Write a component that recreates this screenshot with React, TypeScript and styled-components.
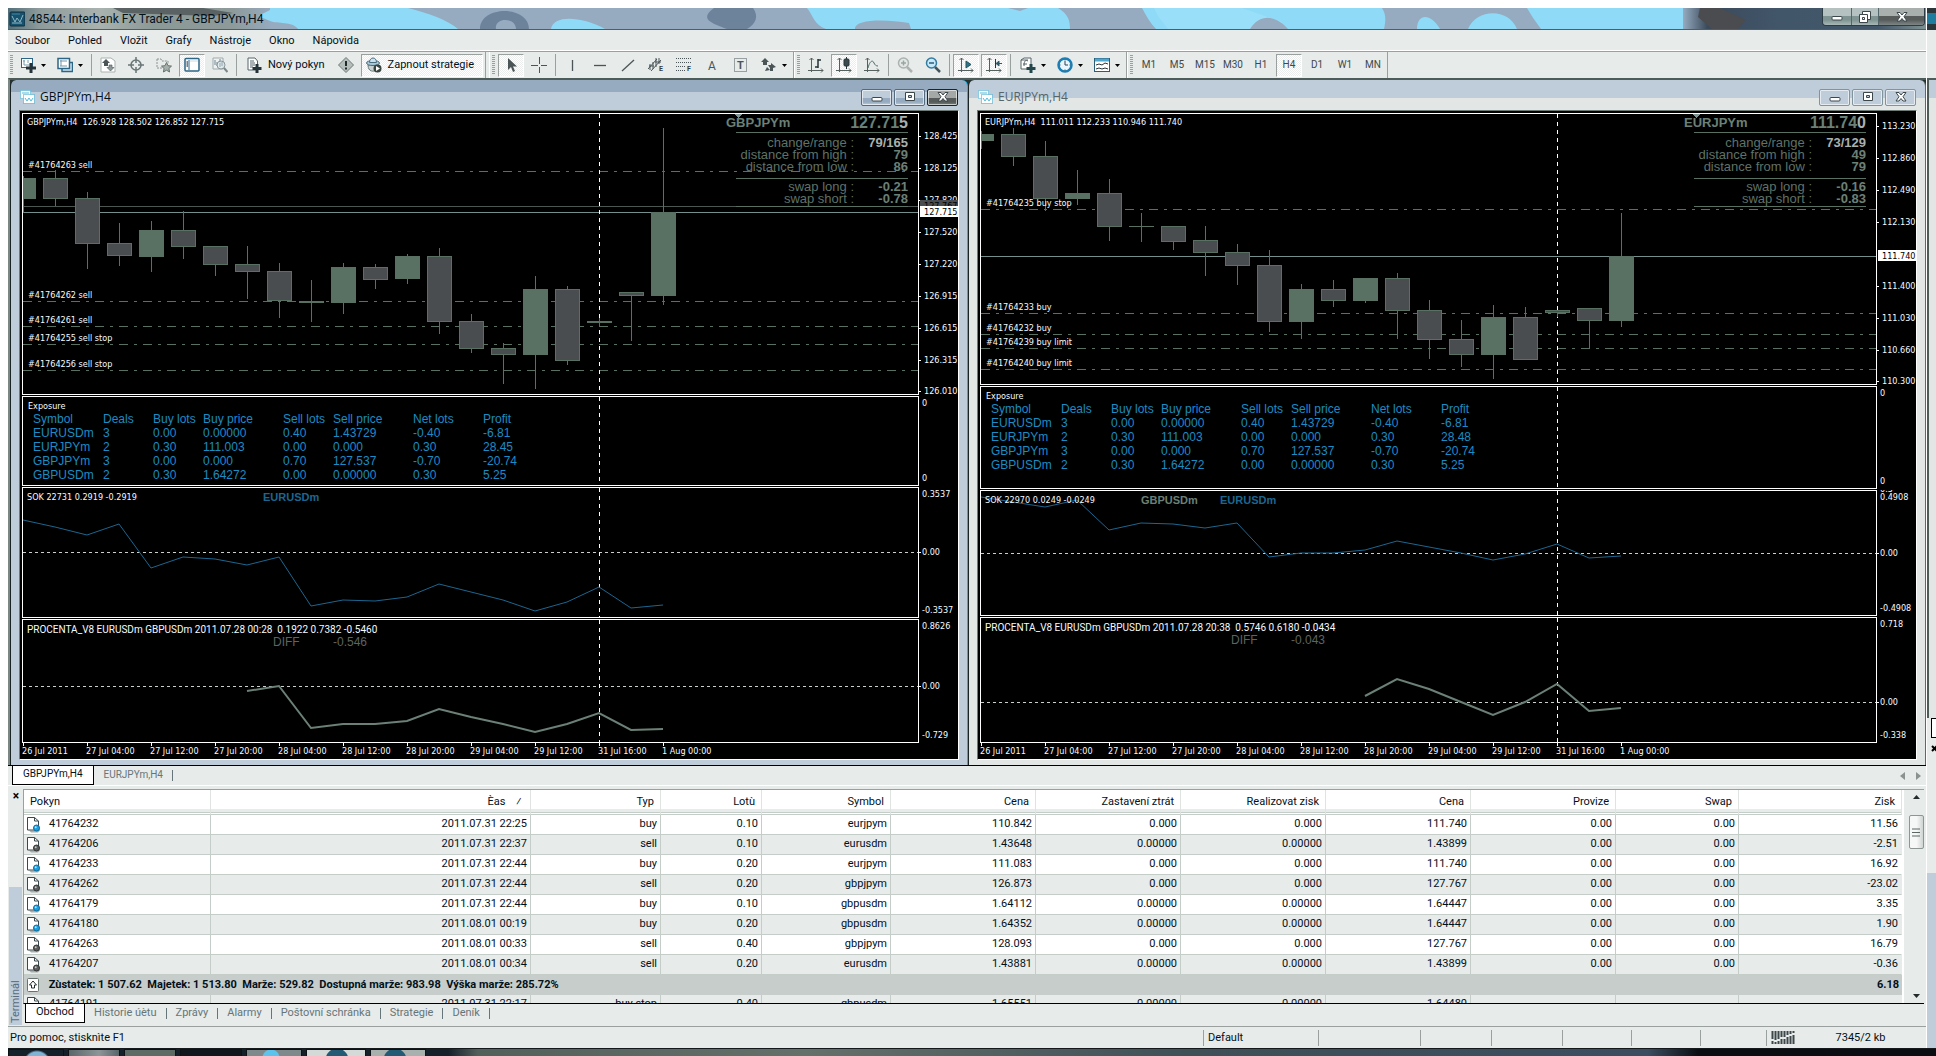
import React from "react";
import styled, { createGlobalStyle, css } from "styled-components";

/* ---------- tokens ---------- */

const c = {
  face: "#e7ebe9",
  line: "#9aa09d",
  grid: "#c5cdc9",
  frame: "#bfccda",
  frameDark: "#96abc0",
  ink: "#02101a",
  dim: "#66757a",
  bull: "#597162",
  bear: "#4a4d50",
  chartText: "#f4fbff",
  blue: "#1b8cc6",
  deepBlue: "#1d6690",
  sage: "#6b8076",
};

const ui = `Roboto, "Open Sans", sans-serif`;
const narrow = `"DejaVu Sans Condensed", Roboto, sans-serif`;
const arial = `"Liberation Sans", Arial, sans-serif`;

const Global = createGlobalStyle`
  html, body { margin: 0; background: #fff; }
  body { font: 11px/14px ${ui}; color: ${c.ink}; overflow-x: hidden; }
  * { box-sizing: border-box; }
  button { font: inherit; color: inherit; margin: 0; padding: 0; border: 0; background: none; }
  svg { display: block; flex: none; }
`;

/* ---------- shell ---------- */

const Page = styled.div`
  min-height: 100vh;
  display: flex;
  flex-direction: column;
  padding: 8px 0 0 8px;
`;
const Desktop = styled.div`
  display: flex;
`;
const AppWindow = styled.div`
  flex: 1;
  min-width: 0;
  background: ${c.face};
`;

const TitleBar = styled.header`
  position: relative;
  height: 22px;
  display: flex;
  align-items: flex-start;
  border-bottom: 1px solid #4a5f6c;
  background: ${c.frameDark};
  overflow: hidden;
`;
const Wallpaper = styled.svg`
  position: absolute;
  inset: 0;
  width: 100%;
  height: 21px;
`;
const AppTitle = styled.h1`
  position: relative;
  margin: 0;
  flex: 1;
  display: flex;
  align-items: center;
  gap: 4px;
  height: 21px;
  padding-left: 1px;
  font: 400 12px/20px ${ui};
`;
const CaptionGroup = styled.div`
  position: relative;
  display: flex;
  height: 18px;
  margin-right: 1px;
  border: 1px solid #2d3c44;
  border-top: 0;
  border-radius: 0 0 4px 4px;
  overflow: hidden;
`;
const AppCaption = styled.button<{ $w: number; $dark?: boolean }>`
  width: ${(p) => p.$w}px;
  display: flex;
  align-items: center;
  justify-content: center;
  border-left: 1px solid #55666b;
  background: ${(p) =>
    p.$dark
      ? "linear-gradient(#a9afad 0 8px, #575c5b 8px 12px, #7d8785)"
      : "linear-gradient(#b4c1c0 0 8px, #7f9492 8px 12px, #a9b8b6)"};
  &:first-child { border-left: 0; }
`;

const MenuBar = styled.nav`
  display: flex;
  gap: 18px;
  height: 22px;
  padding-left: 7px;
  align-items: center;
  border-bottom: 1px solid ${c.line};
  box-shadow: inset 0 -1px #fff;
  font-size: 11px;
`;

const ToolRow = styled.div`
  display: flex;
  height: 26px;
`;
const ToolGroup = styled.div`
  display: flex;
  align-items: center;
  padding-left: 2px;
  border-left: 1px solid #fff;
  border-right: 1px solid ${c.line};
  &:first-child {
    border-left: 0;
    padding-right: 1px;
    margin-right: 3px;
  }
`;
const Grip = styled.span`
  width: 3px;
  height: 20px;
  margin: 0 2px 0 0;
  background: repeating-linear-gradient(${c.line} 0 1px, transparent 1px 2px);
`;
const ToolSep = styled.span`
  width: 1px;
  height: 22px;
  margin: 0 2px;
  background: ${c.line};
`;
const pressed = css`
  border: 1px solid #fff;
  border-top-color: ${c.line};
  border-left-color: ${c.line};
  background: repeating-conic-gradient(#fff 0 25%, #eceeed 0 50%) 0 0 / 2px 2px;
`;
const Tool = styled.button<{ $on?: boolean }>`
  width: 26px;
  height: 23px;
  margin: 0 1px;
  display: flex;
  align-items: center;
  justify-content: center;
  font-size: 10px;
  color: #40484c;
  ${(p) => p.$on && pressed}
`;
const DropTool = styled.button`
  width: 37px;
  height: 23px;
  padding-left: 5px;
  display: flex;
  align-items: center;
  gap: 5px;
  ${ToolSep} + &, ${Tool} + & { margin-left: 2px; }
`;
const TextTool = styled.button<{ $on?: boolean }>`
  height: 23px;
  padding: ${(p) => (p.$on ? "0 8px 0 4px" : "0 6px")};
  margin: 0 1px;
  display: flex;
  align-items: center;
  gap: 6px;
  white-space: nowrap;
  ${(p) => p.$on && pressed}
`;

/* ---------- chart windows ---------- */

const Workspace = styled.main`
  display: flex;
  border-top: 2px solid #4e5c59;
  border-left: 2px solid #7c8784;
  background: #26302f;
`;
const ChartFrame = styled.section<{ $active?: boolean }>`
  flex: 1;
  min-width: 0;
  padding: 0 8px 5px;
  border-radius: 6px 6px 0 0;
  border-left: 1px solid #1b2526;
  border-right: 1px solid ${(p) => (p.$active ? "#19b4ea" : "#5d6967")};
  background: ${(p) =>
    p.$active
      ? `linear-gradient(${c.frameDark} 0 12px, ${c.frame} 12px)`
      : `linear-gradient(${c.frame} 0 18px, #e2e6e4 18px)`};
`;
const FrameTitle = styled.header<{ $active?: boolean }>`
  height: 30px;
  padding: 4px 1px 0 0;
  display: flex;
  align-items: center;
  gap: 2px;
  color: ${(p) => (p.$active ? c.ink : "#55646b")};
`;
const FrameName = styled.h2`
  flex: 1;
  margin: 0 0 0 3px;
  font: 400 12px/24px "Open Sans", sans-serif;
`;
const FrameButton = styled.button<{ $active?: boolean; $close?: boolean }>`
  width: 31px;
  height: 17px;
  display: flex;
  align-items: center;
  justify-content: center;
  border: 1px solid ${(p) => (p.$active ? (p.$close ? "#1d2425" : "#566a7e") : "#81949c")};
  border-radius: 2px;
  box-shadow: inset 0 0 0 1px rgba(255, 255, 255, 0.6);
  background: ${(p) =>
    !p.$active
      ? c.frame
      : p.$close
        ? "linear-gradient(#a4a9a7 0 8px, #565b5a 8px 12px, #77837c)"
        : `linear-gradient(${c.frame} 0 8px, ${c.frameDark} 8px 12px, ${c.frame})`};
`;
const ChartClient = styled.div`
  border: 1px solid #fff;
  border-top-color: #6d7a75;
  border-left-color: #6d7a75;
  padding: 2px 0 0 2px;
  background: #000;
  display: flex;
  flex-direction: column;
  gap: 1px;
`;
const PanelRow = styled.div<{ $h: number }>`
  display: flex;
  height: ${(p) => p.$h}px;
`;
const Plot = styled.div`
  position: relative;
  flex: 1;
  min-width: 0;
  border: 1px solid #fff;
  overflow: hidden;
`;
const PlotSvg = styled.svg`
  position: absolute;
  inset: 0;
  width: 100%;
  height: 100%;
`;
const Note = styled.text<{ $large?: boolean }>`
  font: ${(p) => (p.$large ? `10px/10px ${ui}` : `9px/10px ${narrow}`)};
  fill: ${c.chartText};
  white-space: pre;
`;
const Mark = styled.text<{ $bold?: boolean }>`
  font: ${(p) => (p.$bold ? "700 11px" : "400 12px")} ${arial};
`;
const AxisSvg = styled.svg`
  width: 39px;
  height: 100%;
  overflow: hidden;
`;
const TimeSvg = styled.svg`
  width: 100%;
  height: 16px;
  margin-top: -1px;
`;

const Info = styled.div`
  position: absolute;
  top: 0;
  right: 10px;
  width: 182px;
  font: 13px/12px ${arial};
  color: #5e7268;
`;
const InfoHead = styled.div`
  display: flex;
  justify-content: space-between;
  align-items: center;
  height: 18px;
  font-weight: 700;
  color: ${c.sage};
  strong { font-size: 16px; }
  em { font-style: normal; color: #a9b1ae; }
`;
const InfoGroup = styled.dl<{ $last?: boolean }>`
  margin: 0 0 0 10px;
  padding: ${(p) => (p.$last ? "2px 0 1px" : "4px 0 5px")};
  border-top: 1px solid ${c.bull};
  ${(p) => p.$last && `border-bottom: 1px solid ${c.bull};`}
`;
const InfoRow = styled.div<{ $lit?: boolean }>`
  display: flex;
  justify-content: flex-end;
  dt { white-space: nowrap; }
  dd {
    width: 54px;
    margin: 0;
    text-align: right;
    font-weight: 700;
    color: ${(p) => (p.$lit ? "#a9b1ae" : c.sage)};
  }
`;

const Exposure = styled.div`
  padding: 4px 0 0 5px;
`;
const ExposureTitle = styled.h3`
  margin: 0;
  font: 400 9px/10px ${narrow};
  color: ${c.chartText};
`;
const ExposureTable = styled.table`
  margin-left: 5px;
  border-spacing: 0;
  table-layout: fixed;
  width: 530px;
  font: 12px/14px ${arial};
  color: ${c.blue};
  th, td { padding: 0; text-align: left; font-weight: 400; white-space: nowrap; }
  th { height: 15px; }
`;

/* ---------- tabs, terminal, status ---------- */

const ChartTabs = styled.div`
  display: flex;
  height: 21px;
  border-top: 1px solid #000;
  border-bottom: 1px solid #fff;
  padding-left: 4px;
  font: 10px/14px ${ui};
`;
const Tab = styled.button<{ $active?: boolean; $wide?: boolean }>`
  height: 18px;
  padding: ${(p) => (p.$wide ? "0 10px 1px" : p.$active ? "0 10px 1px" : "0 10px 1px 9px")};
  color: ${c.dim};
  position: relative;
  &::after {
    content: "";
    position: absolute;
    right: 0;
    top: 4px;
    height: 11px;
    border-right: 1px solid ${c.dim};
  }
  ${(p) =>
    p.$active &&
    css`
      height: 19px;
      padding-bottom: 2px;
      color: ${c.ink};
      background: #fff;
      border: 1px solid #000;
      border-top: 0;
      &::after { content: none; }
    `}
`;
const Spacer = styled.span`
  flex: 1;
`;
const Pager = styled.span`
  display: flex;
  gap: 11px;
  align-items: center;
  padding-right: 5px;
`;

const Terminal = styled.section`
  display: flex;
  padding: 3px 2px 1px 1px;
`;
const Dock = styled.aside`
  width: 14px;
  display: flex;
  flex-direction: column;
  align-items: center;
  justify-content: space-between;
`;
const DockClose = styled.button`
  height: 14px;
  font: 700 12px/12px ${ui};
  color: #000;
`;
const DockName = styled.span`
  width: 13px;
  height: 138px;
  writing-mode: vertical-rl;
  transform: rotate(180deg);
  margin-right: 1px;
  padding-top: 2px;
  background: ${c.frame};
  color: #5a6c7c;
  font-size: 11px;
  line-height: 13px;
`;
const TerminalBody = styled.div`
  flex: 1;
  min-width: 0;
`;
const Scroller = styled.div`
  display: flex;
  border-top: 1px solid ${c.line};
  border-left: 1px solid ${c.line};
  border-bottom: 1px solid #000;
  height: 215px;
  overflow: hidden;
`;
const Orders = styled.table`
  flex: 1;
  align-self: flex-start;
  table-layout: fixed;
  border-spacing: 0;
  background: #fff;
`;
const HeadCell = styled.th<{ $left?: boolean }>`
  height: 25px;
  padding: ${(p) => (p.$left ? "0 0 0 6px" : "0 6px 0 0")};
  font-weight: 400;
  text-align: ${(p) => (p.$left ? "left" : "right")};
  border-right: 1px solid #dfe4e1;
  border-bottom: 1px solid ${c.grid};
  box-shadow: inset 0 -1px #fff, inset 0 -2px ${c.grid}, inset 0 -5px ${c.face};
  white-space: pre;
`;
const Row = styled.tr<{ $alt?: boolean }>`
  background: ${(p) => (p.$alt ? c.face : "#fff")};
`;
const Cell = styled.td`
  height: 20px;
  padding: 0 3px 1px 0;
  text-align: right;
  border-right: 1px solid ${c.grid};
  border-bottom: 1px solid ${c.grid};
  white-space: nowrap;
  &:first-child { padding: 0 0 1px 2px; }
  &:last-child { border-right-color: transparent; }
`;
const Ticket = styled.span`
  display: flex;
  align-items: center;
  gap: 7px;
`;
const Balance = styled.tr`
  background: #c6cdca;
  font-weight: 700;
  td { height: 20px; padding: 0 3px 1px; text-align: right; white-space: pre; }
`;
const ScrollBar = styled.div`
  width: 22px;
  padding: 5px 1px 5px 5px;
  border-left: 2px solid #fff;
  display: flex;
  flex-direction: column;
  align-items: center;
`;
const Thumb = styled.span`
  width: 15px;
  height: 34px;
  margin: 16px 0 auto;
  display: flex;
  align-items: center;
  justify-content: center;
  border: 1px solid #8d9693;
  border-radius: 2px;
  background: linear-gradient(90deg, #f6f8f7 0 50%, #cfd5d2);
`;
const TerminalTabs = styled.div`
  display: flex;
  height: 21px;
  padding-left: 2px;
`;

const StatusBar = styled.footer`
  display: flex;
  height: 22px;
  align-items: center;
  border-top: 1px solid ${c.line};
  padding-left: 2px;
`;
const StatusCell = styled.span<{ $w: number }>`
  width: ${(p) => p.$w}px;
  height: 16px;
  padding-left: 4px;
  display: flex;
  align-items: center;
  border-left: 1px solid ${c.line};
`;
const Traffic = styled.span`
  flex: 1;
  text-align: center;
`;

/* the neighbouring window that peeks in at the right */
const Peek = styled.div`
  width: 10px;
  display: flex;
  flex-direction: column;
  border-left: 1px solid #fff;
  background: ${c.face};
  overflow: hidden;
`;
const PeekPart = styled.div<{ $h?: number; $bg: string }>`
  ${(p) => (p.$h ? `height: ${p.$h}px;` : "flex: 1;")}
  background: ${(p) => p.$bg};
`;
const PeekFrame = styled.div`
  height: 640px;
  border-top: 2px solid #4e5c59;
  border-left: 2px solid #4e5c59;
  background: linear-gradient(${c.frame} 0 18px, #e2e6e4 18px);
`;
const PeekTab = styled.div`
  height: 20px;
  margin-left: 4px;
  border: 1px solid #000;
  border-right: 0;
  background: #fff;
`;

const Taskbar = styled.div`
  flex: 1;
  min-height: 8px;
  display: flex;
  border-top: 1px solid #15191b;
  background: linear-gradient(90deg, #14202a 0 440px, #52605c 470px, #64706a 800px, #3f5057 1180px, #3b4d60 1640px, #0a0e12 1690px);
`;
const TaskButton = styled.span<{ $w: number; $bg: string }>`
  width: ${(p) => p.$w}px;
  margin-right: 4px;
  border: 1px solid #0d1215;
  border-bottom: 0;
  background: ${(p) => p.$bg};
`;

/* ---------- icons ---------- */

const Icon = ({ children, size = 16 }: { children: React.ReactNode; size?: number }) => (
  <svg width={size} height={size} viewBox="0 0 16 16" fill="none" aria-hidden="true">
    {children}
  </svg>
);
const Caret = () => (
  <svg width="5" height="3" viewBox="0 0 5 3" aria-hidden="true">
    <path d="M0 0h5L2.500 3z" fill="#000" />
  </svg>
);
const bluePen = "#2c6585";
const grayPen = "#4b5558";

const NewChartIcon = () => (
  <Icon>
    <rect x="1.500" y="1.500" width="11" height="9" fill="#fff" stroke={bluePen} />
    <path d="M4 3v5M3 4h2M4 8h7M8 3v3" stroke="#7a9cae" />
    <path d="M11 6v10M6 11h10" stroke="#26343a" strokeWidth="3" />
  </Icon>
);
const ProfilesIcon = () => (
  <Icon>
    <path d="M5 12v2.500h10.500v-9H13" fill="#cfe6f2" stroke={bluePen} strokeWidth="1.500" />
    <rect x="1" y="1.500" width="11.500" height="10" fill="#fff" stroke={bluePen} strokeWidth="1.500" />
    <path d="M3 4h7M4 3v6M3 9h7" stroke="#6f95aa" />
  </Icon>
);
const MarketIcon = () => (
  <Icon>
    <path d="M1 1h10l4 3v11H1z" fill="#fff" stroke="#a9b3b1" />
    <path d="M6 2l4 4H8v3H4V6H2z" fill={grayPen} />
    <path d="M10.500 14l-3.500-3.500h2V8h3v2.500h2z" fill="#8b9798" stroke={grayPen} strokeWidth=".6" />
  </Icon>
);
const DataIcon = () => (
  <Icon>
    <circle cx="8" cy="8" r="5" stroke="#6a7577" strokeWidth="1.500" />
    <path d="M8 0v6M8 10v6M0 8h6M10 8h6" stroke="#6a7577" strokeWidth="1.500" />
  </Icon>
);
const NavigatorIcon = () => (
  <Icon>
    <path d="M1 2h4l1 2h6v3M1 2v9h5" fill="none" stroke="#8a9593" strokeDasharray="2 1" />
    <path d="M10.500 5.500l1.500 3.200 3.500.4-2.600 2.400.7 3.500-3.100-1.800-3.100 1.800.7-3.500-2.600-2.400 3.500-.4z" fill="#a5b0ab" stroke="#66726e" />
  </Icon>
);
const TerminalIcon = () => (
  <Icon>
    <rect x="1" y="1.500" width="14" height="12.500" rx="1" fill="#fff" stroke={bluePen} strokeWidth="1.500" />
    <path d="M5 3v10" stroke={bluePen} />
    <path d="M2.500 5h1.500M2.500 7h1.500M2.500 9h1.500" stroke="#000" />
    <path d="M6 4h8" stroke="#cfd9dd" />
  </Icon>
);
const TesterIcon = () => (
  <Icon>
    <path d="M1 1h10v11H1z" fill="#eef1f0" stroke="#9fabaa" />
    <path d="M3 3v5M5 5v4M8 2v4" stroke="#6a8795" />
    <circle cx="9" cy="8" r="4" fill="#dfe9ec" fillOpacity=".8" stroke="#8a9699" />
    <path d="M8 6v4M10 5v4" stroke="#8fa5ae" />
    <path d="M12 11l3.500 4" stroke="#7a878a" strokeWidth="2" />
  </Icon>
);
const OrderIcon = () => (
  <Icon>
    <path d="M2 1h7l2.500 3v9H2z" fill="#fff" stroke="#56646a" />
    <path d="M4 4h4M4 6h5M4 8h5M4 10h3" stroke="#56646a" />
    <path d="M11 7v9M6.500 11.500h9" stroke="#26343a" strokeWidth="3" />
  </Icon>
);
const AlertIcon = () => (
  <Icon>
    <path d="M8 .5L15.500 8 8 15.500.5 8z" fill="#b5bebb" stroke="#6d7876" />
    <path d="M8 4v5M8 10.500v2" stroke="#20282a" strokeWidth="2" />
  </Icon>
);
const ExpertIcon = () => (
  <Icon>
    <path d="M2 8c0 7 6 7 8 5l1-5z" fill="#c9d2d0" stroke="#6b7a7c" />
    <ellipse cx="7" cy="6" rx="6.500" ry="2.500" fill="#a9c9d8" stroke="#4b6c7c" />
    <path d="M3.500 5.500c0-6 7-6 7 0z" fill="#c9e2ee" stroke="#4b6c7c" />
    <circle cx="11.500" cy="11.500" r="4" fill="#39443f" />
    <path d="M10 9v5l4-2.500z" fill="#fff" />
  </Icon>
);
const CursorIcon = () => (
  <Icon>
    <path d="M5 1v12l3-3 2 5 2-1-2-4.500h4z" fill={grayPen} />
  </Icon>
);
const CrossIcon = () => (
  <Icon>
    <path d="M8.500 0v7M8.500 10v6M0 8.500h7M10 8.500h6" stroke={grayPen} />
  </Icon>
);
const LineIcon = ({ d }: { d: string }) => (
  <Icon>
    <path d={d} stroke={grayPen} strokeWidth="1.300" />
  </Icon>
);
const SubLetter = ({ children }: { children: string }) => (
  <text x="11" y="14" fontSize="7" fontFamily="Roboto, sans-serif" fontWeight="700" fill="#333c40">
    {children}
  </text>
);
const ChannelIcon = () => (
  <Icon>
    <path d="M0 12L9 2M3 14L13 3M2 7v6M5 5v7M8 1v9M11 1v6M1 9h5M7 5h6" stroke={grayPen} />
    <SubLetter>E</SubLetter>
  </Icon>
);
const FiboIcon = () => (
  <Icon>
    <path d="M0 1.500h16M0 5.500h16M0 9.500h10M0 13.500h9" stroke={grayPen} strokeDasharray="1 1" />
    <SubLetter>F</SubLetter>
  </Icon>
);
const TextIcon = () => (
  <Icon>
    <text x="8" y="13" textAnchor="middle" fontSize="12" fontFamily="Roboto, sans-serif" fill={grayPen}>A</text>
  </Icon>
);
const LabelIcon = () => (
  <Icon>
    <rect x="2.500" y="1.500" width="12" height="13" stroke={grayPen} strokeDasharray="1 1" />
    <text x="8.500" y="12" textAnchor="middle" fontSize="11" fontWeight="700" fontFamily="Roboto, sans-serif" fill={grayPen}>T</text>
  </Icon>
);
const ArrowsIcon = () => (
  <Icon>
    <path d="M4 1l4 4H6v3H2V5H0z" fill={grayPen} />
    <path d="M7 8h3V6l5 4-3 1v3H9v-3z" fill={grayPen} />
    <path d="M4 14l2-4 3 3z" fill={grayPen} />
  </Icon>
);
const AxisPen = () => <path d="M3.500 1v14M0 13.500h15M1.500 3l2-2 2 2M13 11.500l2 2-2 2" stroke="#56615f" />;
const BarsIcon = () => (
  <Icon>
    <AxisPen />
    <path d="M10 2v9M10 3h3M7 10h3" stroke="#26343a" strokeWidth="1.500" />
  </Icon>
);
const CandlesIcon = () => (
  <Icon>
    <AxisPen />
    <path d="M10.500 0v12" stroke="#26343a" />
    <rect x="8" y="2" width="5" height="7" rx="1" fill="#3b4b4c" stroke="#26343a" />
  </Icon>
);
const CurveIcon = () => (
  <Icon>
    <AxisPen />
    <path d="M4 11c2-8 5-8 6-5 1 2 2 3 4 3" stroke="#4e6b66" />
  </Icon>
);
const LensIcon = ({ plus }: { plus?: boolean }) => (
  <Icon>
    <path d="M10 10l5 5" stroke={plus ? "#aab3b0" : "#41565c"} strokeWidth="2.500" />
    <circle cx="6.500" cy="6" r="5" fill={plus ? "#e3e8e6" : "#c5e9f9"} stroke={plus ? "#aab3b0" : "#347ba0"} strokeWidth="1.500" />
    <path d={plus ? "M4 6h5M6.500 3.500v5" : "M4 6h5"} stroke={plus ? "#9aa5a2" : "#2c5d78"} strokeWidth="1.500" />
  </Icon>
);
const ScrollIcon = () => (
  <Icon>
    <AxisPen />
    <path d="M8 4v7l5-3.500z" fill="#2f7486" stroke="#26525e" />
  </Icon>
);
const ShiftIcon = () => (
  <Icon>
    <AxisPen />
    <path d="M9.500 2v9" stroke="#26343a" />
    <path d="M10 6.500l3-2.500v5zM13 6.500h3" fill="#2f5a66" stroke="#2f5a66" />
  </Icon>
);
const IndicatorIcon = () => (
  <Icon>
    <path d="M1 3h7M4 1h7v11H1V3z" fill="#fff" stroke="#56646a" />
    <path d="M4 9c0-6 2-6 4-5M3 7h4" stroke="#56646a" />
    <path d="M11 7v9M6.500 11.500h9" stroke="#24474c" strokeWidth="3" />
  </Icon>
);
const ClockIcon = () => (
  <Icon>
    <circle cx="8" cy="8" r="6.500" fill="#e9f6fc" stroke="#1a7db5" strokeWidth="2.500" />
    <path d="M8 4v4h3" stroke="#2b4552" />
    <path d="M8 2.500v1M8 12.500v1M2.500 8h1M12.500 8h1" stroke="#2b4552" />
  </Icon>
);
const TemplateIcon = () => (
  <Icon>
    <rect x=".5" y="1.500" width="15" height="13" fill="#fff" stroke="#2c5d78" />
    <path d="M1 3h14" stroke="#4fa6cc" strokeWidth="3" />
    <path d="M2 8l3-1 3 1 3-2 3 1M2 12l3-1 3 1 3-1 3 1" stroke="#26343a" />
  </Icon>
);
const WindowIcon = () => (
  <Icon>
    <rect x="1.500" y="1.500" width="10" height="8" fill="#fff" stroke="#3fb3d6" strokeDasharray="1 1" />
    <rect x="4.500" y="5.500" width="11" height="9" fill="#fff" stroke="#2f9fc4" strokeDasharray="1 1" />
    <path d="M6 9l2 3 2-3 2 3 2-3" stroke="#52bddb" />
    <path d="M3 4h7" stroke="#52bddb" />
  </Icon>
);
const AppIcon = () => (
  <Icon>
    <rect x="1" y="1" width="15" height="14" rx="1" fill="#17526f" stroke="#0e2c3c" />
    <path d="M3 5l3 6 2-4 3 4 3-7M3 12h10" stroke="#8fb9c6" />
    <path d="M3 3h8" stroke="#3f87a4" />
  </Icon>
);
const glyphPen = { fill: "#fff", stroke: "#3c474c" };
const MinGlyph = () => (
  <svg width="12" height="9" viewBox="0 0 12 9" aria-hidden="true">
    <rect x="1" y="4.500" width="10" height="3.500" rx="1" {...glyphPen} />
  </svg>
);
const MaxGlyph = () => (
  <svg width="12" height="10" viewBox="0 0 12 10" aria-hidden="true">
    <path d="M1.500.5h9v8h-9zM4.500 3.500v2h3v-2z" fillRule="evenodd" {...glyphPen} />
  </svg>
);
const RestoreGlyph = () => (
  <svg width="12" height="12" viewBox="0 0 12 12" aria-hidden="true">
    <path d="M3.500.5h8v8h-8z" {...glyphPen} />
    <path d="M.5 3.500h8v8h-8zM3.500 6.500v2h2v-2z" fillRule="evenodd" {...glyphPen} />
  </svg>
);
const CloseGlyph = () => (
  <svg width="12" height="10" viewBox="0 0 12 10" aria-hidden="true">
    <path d="M1 .5h3l2 2.500 2-2.500h3L8 4.700l3 4.300H8L6 6.500 4 9H1l3-4.300z" {...glyphPen} />
  </svg>
);
const DocIcon = ({ buy }: { buy: boolean }) => (
  <svg width="16" height="17" viewBox="0 0 16 17" fill="none" aria-hidden="true">
    <path d="M3 14.500h9l2-2v2l-2 2H5z" fill="#a7afac" />
    <path d="M1.500 1.500h7l4 3.500v9h-11z" fill="#fff" stroke="#3b484e" />
    <path d="M8.500 1.500V5h4" stroke="#3b484e" />
    <circle cx="10.500" cy="12" r="3" fill={buy ? "#1c9fe0" : "#5a5d5c"} stroke={buy ? "#0f6a9c" : "#2f3231"} />
    <circle cx="9.700" cy="11.200" r="1" fill={buy ? "#b5e5fb" : "#c2c5c4"} />
  </svg>
);
const BalanceIcon = () => (
  <svg width="12" height="14" viewBox="0 0 12 14" aria-hidden="true">
    <rect x=".5" y=".5" width="11" height="13" rx="1" fill="#fff" stroke="#68726f" />
    <path d="M6 3L2.500 7h2v3h3V7h2z" fill="#fff" stroke="#222a2c" />
  </svg>
);

/* ---------- chart data ---------- */

type Candle = [high: number, top: number, bottom: number, low: number, bull?: 1];
type Point = [x: number, y: number];
type Tick = [label: string, y: number];
type Pane = { y: number; h: number; ticks: Tick[] };
type Chart = {
  name: string;
  active?: boolean;
  x: number;
  quote: string;
  candles: Candle[];
  orders: [label: string, y: number][];
  ask?: number;
  bid: number;
  price: string;
  range: string;
  high: string;
  low: string;
  swapLong: string;
  swapShort: string;
  profit: string;
  panes: [Pane, Pane, Pane, Pane];
  sok: { text: string; y: number; zero: number; marks: [string, number, string][]; start: number; ys: number[] };
  diff: { text: string; value: string; y: number; zero: number; start: number; ys: number[] };
};

const STEP = 32;

const charts: Chart[] = [
  {
    name: "GBPJPYm",
    active: true,
    x: 23,
    quote: "126.928 128.502 126.852 127.715",
    candles: [
      [176, 178, 198, 212, 1], [170, 178, 198, 205], [192, 198, 243, 268], [223, 243, 255, 265],
      [221, 230, 256, 271, 1], [211, 230, 246, 258], [246, 246, 264, 275], [246, 264, 271, 298],
      [263, 271, 300, 317], [280, 301, 302, 321, 1], [263, 267, 302, 313, 1], [264, 267, 279, 288],
      [254, 256, 278, 283, 1], [248, 256, 321, 333], [314, 321, 348, 352], [343, 348, 354, 383],
      [276, 289, 354, 388, 1], [286, 289, 360, 364], [318, 321, 322, 326, 1], [292, 292, 295, 340],
      [128, 212, 295, 304, 1],
    ],
    orders: [
      ["#41764263 sell", 171], ["#41764262 sell", 301], ["#41764261 sell", 326],
      ["#41764255 sell stop", 344], ["#41764256 sell stop", 370],
    ],
    ask: 206,
    bid: 212,
    price: "127.715",
    range: "79/165",
    high: "79",
    low: "86",
    swapLong: "-0.21",
    swapShort: "-0.78",
    profit: "28.45",
    panes: [
      { y: 113, h: 282, ticks: [["128.425", 136], ["128.125", 168], ["127.820", 200], ["127.520", 232], ["127.220", 264], ["126.915", 296], ["126.615", 328], ["126.315", 360], ["126.010", 391]] },
      { y: 396, h: 90, ticks: [["0", 403], ["0", 478]] },
      { y: 487, h: 131, ticks: [["0.3537", 494], ["0.00", 552], ["-0.3537", 610]] },
      { y: 619, h: 124, ticks: [["0.8626", 626], ["0.00", 686], ["-0.729", 735]] },
    ],
    sok: {
      text: "SOK 22731 0.2919 -0.2919",
      y: 497,
      zero: 552,
      marks: [["EURUSDm", 263, c.deepBlue]],
      start: 0,
      ys: [520, 527, 535, 524, 568, 557, 559, 565, 557, 606, 600, 601, 597, 584, 592, 600, 611, 602, 587, 608, 605],
    },
    diff: {
      text: "PROCENTA_V8 EURUSDm GBPUSDm 2011.07.28 00:28  0.1922 0.7382 -0.5460",
      value: "-0.546",
      y: 629,
      zero: 686,
      start: 7,
      ys: [691, 686, 728, 724, 724, 721, 709, 717, 724, 732, 724, 713, 730, 729],
    },
  },
  {
    name: "EURJPYm",
    x: 981,
    quote: "111.011 112.233 110.946 111.740",
    candles: [
      [131, 134, 140, 148, 1], [128, 134, 156, 165], [141, 156, 198, 210], [170, 193, 198, 204, 1],
      [179, 193, 226, 240], [213, 226, 226, 241, 1], [226, 226, 241, 249], [226, 240, 252, 275],
      [244, 252, 265, 284], [250, 265, 321, 331], [284, 289, 321, 338, 1], [280, 289, 300, 306],
      [278, 278, 300, 302, 1], [273, 278, 310, 338], [300, 310, 339, 358], [320, 339, 354, 366],
      [305, 317, 354, 378, 1], [307, 317, 359, 359], [310, 310, 312, 316], [308, 308, 320, 348],
      [213, 256, 320, 326, 1],
    ],
    orders: [
      ["#41764235 buy stop", 209], ["#41764233 buy", 313], ["#41764232 buy", 334],
      ["#41764239 buy limit", 348], ["#41764240 buy limit", 369],
    ],
    bid: 256,
    price: "111.740",
    range: "73/129",
    high: "49",
    low: "79",
    swapLong: "-0.16",
    swapShort: "-0.83",
    profit: "28.48",
    panes: [
      { y: 113, h: 272, ticks: [["113.230", 126], ["112.860", 158], ["112.490", 190], ["112.130", 222], ["111.400", 286], ["111.030", 318], ["110.660", 350], ["110.300", 381]] },
      { y: 386, h: 103, ticks: [["0", 393], ["0", 481]] },
      { y: 490, h: 126, ticks: [["0.5", 489], ["0.4908", 497], ["0.00", 553], ["-0.4908", 608]] },
      { y: 617, h: 126, ticks: [["0.718", 624], ["0.00", 702], ["-0.338", 735]] },
    ],
    sok: {
      text: "SOK 22970 0.0249 -0.0249",
      y: 500,
      zero: 553,
      marks: [["GBPUSDm", 1141, c.sage], ["EURUSDm", 1220, c.deepBlue]],
      start: 0,
      ys: [497, 502, 507, 500, 530, 523, 524, 528, 523, 557, 553, 553, 550, 541, 547, 553, 560, 554, 544, 558, 556],
    },
    diff: {
      text: "PROCENTA_V8 EURUSDm GBPUSDm 2011.07.28 20:38  0.5746 0.6180 -0.0434",
      value: "-0.043",
      y: 627,
      zero: 702,
      start: 12,
      ys: [696, 679, 689, 702, 715, 702, 684, 711, 708],
    },
  },
];

const dates = [
  "26 Jul 2011", "27 Jul 04:00", "27 Jul 12:00", "27 Jul 20:00", "28 Jul 04:00", "28 Jul 12:00",
  "28 Jul 20:00", "29 Jul 04:00", "29 Jul 12:00", "31 Jul 16:00", "1 Aug 00:00",
];

const exposureHead = ["Symbol", "Deals", "Buy lots", "Buy price", "Sell lots", "Sell price", "Net lots", "Profit"];
const exposureCols = [70, 50, 50, 80, 50, 80, 70, 80];
const exposureRows = (profit: string) => [
  ["EURUSDm", "3", "0.00", "0.00000", "0.40", "1.43729", "-0.40", "-6.81"],
  ["EURJPYm", "2", "0.30", "111.003", "0.00", "0.000", "0.30", profit],
  ["GBPJPYm", "3", "0.00", "0.000", "0.70", "127.537", "-0.70", "-20.74"],
  ["GBPUSDm", "2", "0.30", "1.64272", "0.00", "0.00000", "0.30", "5.25"],
];

/* ---------- chart pieces ---------- */

const HLine = ({ y, dash, color }: { y: number; dash?: string; color: string }) => (
  <line x1="0" x2="100%" y1={y + 0.5} y2={y + 0.5} stroke={color} strokeDasharray={dash} />
);
const Now = () => {
  const x = 18 * STEP + 0.5;
  return <line x1={x} x2={x} y1="0" y2="100%" stroke="#fff" strokeDasharray="4 4" />;
};
const points = (start: number, ys: number[], top: number) =>
  ys.map((y, i): Point => [(start + i) * STEP, y - top]).map((p) => p.join(",")).join(" ");

const Axis = ({ pane, bid, price, main }: { pane: Pane; bid?: number; price?: string; main?: boolean }) => (
  <AxisSvg shapeRendering="crispEdges">
    {pane.ticks.map(([label, y], i) => (
      <g key={i}>
        {(main || label === "0.00") && <rect x="0" y={y - pane.y} width="2" height="1" fill="#fff" />}
        <Note x={main ? 5 : 3} y={y - pane.y + 3}>{label}</Note>
      </g>
    ))}
    {bid !== undefined && (
      <g>
        {price === "127.715" && (
          <>
            <rect x="1" y={bid - pane.y - 12} width="38" height="8" fill="#4a4d50" />
            <Note x="5" y={bid - pane.y - 3} style={{ fill: "#000" }}>127.767</Note>
          </>
        )}
        <rect x="1" y={bid - pane.y - 6} width="38" height="11" fill="#fff" />
        <Note x="5" y={bid - pane.y + 3} style={{ fill: "#000" }}>{price}</Note>
      </g>
    )}
  </AxisSvg>
);

const PricePlot = ({ chart }: { chart: Chart }) => {
  const top = chart.panes[0].y + 1;
  return (
    <Plot>
      <PlotSvg shapeRendering="crispEdges">
        {chart.orders.map(([label, y]) => (
          <HLine key={label} y={y - top} color={c.bull} dash="9 6 3 6" />
        ))}
        {chart.ask !== undefined && <HLine y={chart.ask - top} color="#4c5754" />}
        <HLine y={chart.bid - top} color="#758e8e" />
        <Now />
        {chart.candles.map(([high, t, b, low, bull], i) => (
          <g key={i}>
            <rect x={i * STEP} y={high - top} width="1" height={low - high + 1} fill={c.bull} />
            <rect x={i * STEP - 12} y={t - top} width="25" height={b - t + 1} fill={c.bull} />
            {!bull && b - t > 1 && (
              <rect x={i * STEP - 11} y={t - top + 1} width="23" height={b - t - 1} fill={c.bear} />
            )}
          </g>
        ))}
        <path d="M711 0h8l-4 4z" fill="#7c9494" />
        <Note x="4" y="11">{`${chart.name},H4  ${chart.quote}`}</Note>
        {chart.orders.map(([label, y]) => (
          <Note key={label} x="5" y={y - top - 3}>{label}</Note>
        ))}
      </PlotSvg>
      <Info>
        <InfoHead>
          <span>{chart.name}</span>
          <strong>{chart.price.slice(0, -1)}<em>{chart.price.slice(-1)}</em></strong>
        </InfoHead>
        <InfoGroup>
          <InfoRow $lit><dt>change/range :</dt><dd>{chart.range}</dd></InfoRow>
          <InfoRow><dt>distance from high :</dt><dd>{chart.high}</dd></InfoRow>
          <InfoRow><dt>distance from low :</dt><dd>{chart.low}</dd></InfoRow>
        </InfoGroup>
        <InfoGroup $last>
          <InfoRow><dt>swap long :</dt><dd>{chart.swapLong}</dd></InfoRow>
          <InfoRow><dt>swap short :</dt><dd>{chart.swapShort}</dd></InfoRow>
        </InfoGroup>
      </Info>
    </Plot>
  );
};

const ExposurePlot = ({ chart }: { chart: Chart }) => (
  <Plot>
    <PlotSvg><Now /></PlotSvg>
    <Exposure>
      <ExposureTitle>Exposure</ExposureTitle>
      <ExposureTable>
        <colgroup>{exposureCols.map((w, i) => <col key={i} style={{ width: w }} />)}</colgroup>
        <thead><tr>{exposureHead.map((h) => <th key={h}>{h}</th>)}</tr></thead>
        <tbody>
          {exposureRows(chart.profit).map((r) => (
            <tr key={r[0]}>{r.map((v, i) => <td key={i}>{v}</td>)}</tr>
          ))}
        </tbody>
      </ExposureTable>
    </Exposure>
  </Plot>
);

const SokPlot = ({ chart }: { chart: Chart }) => {
  const top = chart.panes[2].y + 1;
  const { sok } = chart;
  return (
    <Plot>
      <PlotSvg>
        <HLine y={sok.zero - top} color="#c9cfcb" dash="3 3" />
        <Now />
        <polyline points={points(sok.start, sok.ys, top)} fill="none" stroke={c.deepBlue} />
        <Note x="4" y={sok.y - top + 3}>{sok.text}</Note>
        {sok.marks.map(([t, x, color]) => (
          <Mark key={t} $bold x={x - chart.x} y={sok.y - top + 4} fill={color}>{t}</Mark>
        ))}
      </PlotSvg>
    </Plot>
  );
};

const DiffPlot = ({ chart }: { chart: Chart }) => {
  const top = chart.panes[3].y + 1;
  const { diff } = chart;
  return (
    <Plot>
      <PlotSvg>
        <HLine y={diff.zero - top} color="#c9cfcb" dash="3 3" />
        <Now />
        <polyline points={points(diff.start, diff.ys, top)} fill="none" stroke={c.sage} strokeWidth="2" />
        <Note $large x="4" y={diff.y - top + 4}>{diff.text}</Note>
        <Mark x="250" y={diff.y - top + 17} fill="#5d6461">DIFF</Mark>
        <Mark x="310" y={diff.y - top + 17} fill="#5d6461">{diff.value}</Mark>
      </PlotSvg>
    </Plot>
  );
};

const ChartWindow = ({ chart }: { chart: Chart }) => {
  const [p0, p1, p2, p3] = chart.panes;
  return (
    <ChartFrame $active={chart.active}>
      <FrameTitle $active={chart.active}>
        <WindowIcon />
        <FrameName>{chart.name},H4</FrameName>
        <FrameButton $active={chart.active} aria-label="Minimize"><MinGlyph /></FrameButton>
        <FrameButton $active={chart.active} aria-label="Maximize"><MaxGlyph /></FrameButton>
        <FrameButton $active={chart.active} $close aria-label="Close"><CloseGlyph /></FrameButton>
      </FrameTitle>
      <ChartClient>
        <PanelRow $h={p0.h}><PricePlot chart={chart} /><Axis main pane={p0} bid={chart.bid} price={chart.price} /></PanelRow>
        <PanelRow $h={p1.h}><ExposurePlot chart={chart} /><Axis pane={p1} /></PanelRow>
        <PanelRow $h={p2.h}><SokPlot chart={chart} /><Axis pane={p2} /></PanelRow>
        <PanelRow $h={p3.h}><DiffPlot chart={chart} /><Axis pane={p3} /></PanelRow>
        <TimeSvg shapeRendering="crispEdges">
          {dates.map((d, i) => (
            <g key={d}>
              <rect x={i * 2 * STEP + 1} y="0" width="1" height="3" fill="#fff" />
              <Note x={i * 2 * STEP} y="11">{d}</Note>
            </g>
          ))}
        </TimeSvg>
      </ChartClient>
    </ChartFrame>
  );
};

/* ---------- terminal data ---------- */

const heads = ["Pokyn", "Èas    ⁄ ", "Typ", "Lotù", "Symbol", "Cena", "Zastavení ztrát", "Realizovat zisk", "Cena", "Provize", "Swap", "Zisk"];
const headCols = [187, 320, 130, 101, 129, 145, 145, 145, 145, 145, 123, 163];
const orders = [
  ["41764232", "2011.07.31 22:25", "buy", "0.10", "eurjpym", "110.842", "0.000", "0.000", "111.740", "0.00", "0.00", "11.56"],
  ["41764206", "2011.07.31 22:37", "sell", "0.10", "eurusdm", "1.43648", "0.00000", "0.00000", "1.43899", "0.00", "0.00", "-2.51"],
  ["41764233", "2011.07.31 22:44", "buy", "0.20", "eurjpym", "111.083", "0.000", "0.000", "111.740", "0.00", "0.00", "16.92"],
  ["41764262", "2011.07.31 22:44", "sell", "0.20", "gbpjpym", "126.873", "0.000", "0.000", "127.767", "0.00", "0.00", "-23.02"],
  ["41764179", "2011.07.31 22:44", "buy", "0.10", "gbpusdm", "1.64112", "0.00000", "0.00000", "1.64447", "0.00", "0.00", "3.35"],
  ["41764180", "2011.08.01 00:19", "buy", "0.20", "gbpusdm", "1.64352", "0.00000", "0.00000", "1.64447", "0.00", "0.00", "1.90"],
  ["41764263", "2011.08.01 00:33", "sell", "0.40", "gbpjpym", "128.093", "0.000", "0.000", "127.767", "0.00", "0.00", "16.79"],
  ["41764207", "2011.08.01 00:34", "sell", "0.20", "eurusdm", "1.43881", "0.00000", "0.00000", "1.43899", "0.00", "0.00", "-0.36"],
];
const pending = ["41764191", "2011.07.31 22:17", "buy stop", "0.40", "gbpusdm", "1.65551", "0.00000", "0.00000", "1.64480", "", "", ""];

const OrderRow = ({ row, alt }: { row: string[]; alt: boolean }) => (
  <Row $alt={alt}>
    <Cell><Ticket><DocIcon buy={row[2] === "buy"} />{row[0]}</Ticket></Cell>
    {row.slice(1).map((v, i) => <Cell key={i}>{v}</Cell>)}
  </Row>
);

const menus = ["Soubor", "Pohled", "Vložit", "Grafy", "Nástroje", "Okno", "Nápovìda"];
const periods = ["M1", "M5", "M15", "M30", "H1", "H4", "D1", "W1", "MN"];
const terminalTabs = ["Obchod", "Historie úètu", "Zprávy", "Alarmy", "Poštovní schránka", "Strategie", "Deník"];

export default function App() {
  return (
    <Page>
      <Global />
      <Desktop>
        <AppWindow>
          <TitleBar>
            <Wallpaper viewBox="0 0 1918 21" preserveAspectRatio="none" aria-hidden="true">
              <defs>
                <linearGradient id="haze">
                  <stop offset="0" stopColor="#53707a" />
                  <stop offset=".12" stopColor="#8e9b9b" />
                  <stop offset=".35" stopColor="#a9b2ae" />
                  <stop offset=".55" stopColor="#8b9997" />
                  <stop offset=".85" stopColor="#8d9a99" />
                  <stop offset="1" stopColor="#96abc0" />
                </linearGradient>
                <linearGradient id="night">
                  <stop offset="0" stopColor="#96abc0" />
                  <stop offset=".1" stopColor="#3a4a5b" />
                  <stop offset=".4" stopColor="#42566a" />
                  <stop offset=".8" stopColor="#43576a" />
                  <stop offset="1" stopColor="#7d9092" />
                </linearGradient>
              </defs>
              <rect width="264" height="21" fill="url(#haze)" />
              <path d="M105 0h90l30 5-20 3-90-3z" fill="#5a6263" />
              <path d="M250 8l12-6V0h138c20 5 40 12 50 21H290c-6-8-20-5-28-8z" fill="#8edaf7" />
              <path d="M472 21c0-24 49-24 49 0h-13c0-12-22-12-20 0z" fill="#6d839b" />
              <path d="M543 21c2-14 30-13 54 0z" fill="#8edaf7" />
              <path d="M706 0h39c6 8 3 16-6 21h-20c-16-6-28-10-13-21z" fill="#6d839b" />
              <path d="M799 0h251c10 6 12 12 12 21H818c-12-4-13-14-19-21z" fill="#8edaf7" />
              <path d="M847 21c0-10 30-10 54-6l2 6zM1000 0h20l-8 3z" fill="#96abc0" />
              <path d="M1134 0h240c4 6 4 12 2 21h-228c-6-6-10-14-14-21z" fill="#8edaf7" />
              <path d="M1146 0h88l40 14-6 7h-108c-6-8-10-12-14-21z" fill="#9adff9" />
              <path d="M1242 21c10-16 26-14 38 0z" fill="#96abc0" />
              <path d="M1409 21c0-16 14-16 23 0zM1460 21c8-20 40-22 49 0z" fill="#8edaf7" />
              <path d="M1519 0h156v21h-142c-6-8-10-14-14-21z" fill="#8edaf7" />
              <rect x="1675" width="243" height="21" fill="url(#night)" />
              <path d="M1692 0h20l26 12-8 9h-26l-14-12z" fill="#4a4c50" />
            </Wallpaper>
            <AppTitle><AppIcon />48544: Interbank FX Trader 4 - GBPJPYm,H4</AppTitle>
            <CaptionGroup>
              <AppCaption $w={28} aria-label="Minimize"><MinGlyph /></AppCaption>
              <AppCaption $w={27} aria-label="Restore"><RestoreGlyph /></AppCaption>
              <AppCaption $w={46} $dark aria-label="Close"><CloseGlyph /></AppCaption>
            </CaptionGroup>
          </TitleBar>
          <MenuBar>{menus.map((m) => <button key={m}>{m}</button>)}</MenuBar>
          <ToolRow role="toolbar">
            <ToolGroup>
              <Grip />
              <DropTool aria-label="New chart"><NewChartIcon /><Caret /></DropTool>
              <DropTool aria-label="Profiles"><ProfilesIcon /><Caret /></DropTool>
              <ToolSep />
              <Tool aria-label="Market watch"><MarketIcon /></Tool>
              <Tool aria-label="Data window"><DataIcon /></Tool>
              <Tool aria-label="Navigator"><NavigatorIcon /></Tool>
              <Tool $on aria-label="Terminal"><TerminalIcon /></Tool>
              <Tool aria-label="Strategy tester"><TesterIcon /></Tool>
              <ToolSep />
              <TextTool><OrderIcon />Nový pokyn</TextTool>
              <Tool aria-label="Meta editor"><AlertIcon /></Tool>
              <TextTool $on><ExpertIcon />Zapnout strategie</TextTool>
            </ToolGroup>
            <ToolGroup>
              <Grip />
              <Tool $on aria-label="Cursor"><CursorIcon /></Tool>
              <Tool aria-label="Crosshair"><CrossIcon /></Tool>
              <ToolSep />
              <Tool aria-label="Vertical line"><LineIcon d="M8.500 3v11" /></Tool>
              <Tool aria-label="Horizontal line"><LineIcon d="M2 8.500h12" /></Tool>
              <Tool aria-label="Trendline"><LineIcon d="M2 14L14 3" /></Tool>
              <Tool aria-label="Channel"><ChannelIcon /></Tool>
              <Tool aria-label="Fibonacci"><FiboIcon /></Tool>
              <Tool aria-label="Text"><TextIcon /></Tool>
              <Tool aria-label="Text label"><LabelIcon /></Tool>
              <DropTool aria-label="Arrows"><ArrowsIcon /><Caret /></DropTool>
            </ToolGroup>
            <ToolGroup>
              <Grip />
              <Tool aria-label="Bar chart"><BarsIcon /></Tool>
              <Tool $on aria-label="Candlesticks"><CandlesIcon /></Tool>
              <Tool aria-label="Line chart"><CurveIcon /></Tool>
              <ToolSep />
              <Tool aria-label="Zoom in"><LensIcon plus /></Tool>
              <Tool aria-label="Zoom out"><LensIcon /></Tool>
              <ToolSep />
              <Tool $on aria-label="Auto scroll"><ScrollIcon /></Tool>
              <Tool $on aria-label="Chart shift"><ShiftIcon /></Tool>
              <ToolSep />
              <DropTool aria-label="Indicators"><IndicatorIcon /><Caret /></DropTool>
              <DropTool aria-label="Periods"><ClockIcon /><Caret /></DropTool>
              <DropTool aria-label="Templates"><TemplateIcon /><Caret /></DropTool>
            </ToolGroup>
            <ToolGroup>
              <Grip />
              {periods.map((p) => <Tool key={p} $on={p === "H4"}>{p}</Tool>)}
            </ToolGroup>
          </ToolRow>

          <Workspace>{charts.map((ch) => <ChartWindow key={ch.name} chart={ch} />)}</Workspace>

          <ChartTabs>
            <Tab $active $wide>GBPJPYm,H4</Tab>
            <Tab $wide>EURJPYm,H4</Tab>
            <Spacer />
            <Pager>
              <svg width="5" height="8" aria-hidden="true"><path d="M5 0v8L0 4z" fill="#8b9391" /></svg>
              <svg width="5" height="8" aria-hidden="true"><path d="M0 0v8l5-4z" fill="#8b9391" /></svg>
            </Pager>
          </ChartTabs>

          <Terminal>
            <Dock>
              <DockClose aria-label="Close terminal">×</DockClose>
              <DockName>Terminál</DockName>
            </Dock>
            <TerminalBody>
              <Scroller>
                <Orders>
                  <colgroup>{headCols.map((w, i) => <col key={i} style={{ width: w }} />)}</colgroup>
                  <thead>
                    <tr>{heads.map((h, i) => <HeadCell key={i} $left={i === 0}>{h}</HeadCell>)}</tr>
                  </thead>
                  <tbody>
                    {orders.map((r, i) => <OrderRow key={r[0]} row={r} alt={i % 2 === 1} />)}
                    <Balance>
                      <td colSpan={11}>
                        <Ticket>
                          <BalanceIcon />
                          {" Zùstatek: 1 507.62  Majetek: 1 513.80  Marže: 529.82  Dostupná marže: 983.98  Výška marže: 285.72%"}
                        </Ticket>
                      </td>
                      <td>6.18</td>
                    </Balance>
                    <OrderRow row={pending} alt />
                  </tbody>
                </Orders>
                <ScrollBar>
                  <svg width="7" height="4" aria-hidden="true"><path d="M0 4h7L3.500 0z" fill="#222a2c" /></svg>
                  <Thumb>
                    <svg width="8" height="9" aria-hidden="true"><path d="M0 1h8M0 4.500h8M0 8h8" stroke="#5c6663" /></svg>
                  </Thumb>
                  <svg width="7" height="4" aria-hidden="true"><path d="M0 0h7L3.500 4z" fill="#222a2c" /></svg>
                </ScrollBar>
              </Scroller>
              <TerminalTabs>
                {terminalTabs.map((t, i) => <Tab key={t} $active={i === 0}>{t}</Tab>)}
              </TerminalTabs>
            </TerminalBody>
          </Terminal>

          <StatusBar>
            <span>Pro pomoc, stisknìte F1</span>
            <Spacer />
            <StatusCell $w={115}>Default</StatusCell>
            <StatusCell $w={102} />
            <StatusCell $w={71} />
            <StatusCell $w={71} />
            <StatusCell $w={69} />
            <StatusCell $w={69} />
            <StatusCell $w={66} />
            <StatusCell $w={160}>
              <svg width="24" height="13" aria-hidden="true">
                <path d="M1.500 0v8M4.500 0v9M7.500 0v8M10.500 0v6M13.500 0v6M16.500 0v4M19.500 0v3M22.500 0v2M1.500 10v3M4.500 11v2M7.500 10v3M10.500 8v5M13.500 8v5M16.500 6v7M19.500 5v8M22.500 4v9" stroke="#3d4649" strokeWidth="2" />
              </svg>
              <Traffic>7345/2 kb</Traffic>
            </StatusCell>
          </StatusBar>
        </AppWindow>

        <Peek aria-hidden="true">
          <PeekPart $h={22} $bg="linear-gradient(#2b363b 0 5px, #1f7ea0 5px 16px, #2b363b 16px)" />
          <PeekPart $h={48} $bg={c.face} />
          <PeekFrame />
          <PeekTab />
          <PeekPart $h={135} $bg={c.face}>
            <svg width="9" height="16" aria-hidden="true"><path d="M5 8l5 5M5 13l5-5" stroke="#000" strokeWidth="2" /></svg>
          </PeekPart>
          <PeekPart $bg={c.frame} />
        </Peek>
      </Desktop>
      <Taskbar>
        <TaskButton $w={56} $bg="radial-gradient(circle at 28px 14px, #7fb4d4 0 12px, #14202a 14px)" />
        <TaskButton $w={52} $bg="linear-gradient(90deg, #59666a, #8c9698 60%, #59666a)" />
        <TaskButton $w={52} $bg="#5d6b66" />
        <TaskButton $w={62} $bg="#10161b" />
        <TaskButton $w={56} $bg="radial-gradient(circle at 24px 8px, #5cc3ec 0 8px, #7e898b 9px)" />
        <TaskButton $w={60} $bg="radial-gradient(circle at 30px 10px, #235a74 0 11px, #d3dad8 12px)" />
        <TaskButton $w={56} $bg="radial-gradient(circle at 24px 10px, #235a74 0 11px, #a9b1af 12px)" />
      </Taskbar>
    </Page>
  );
}
